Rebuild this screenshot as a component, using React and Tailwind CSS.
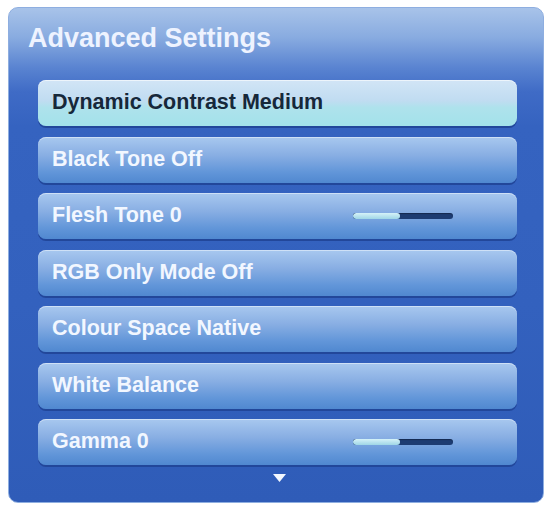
import React from "react"

const items = [
  { label: "Dynamic Contrast Medium", active: true },
  { label: "Black Tone Off" },
  { label: "Flesh Tone 0", slider: 47 },
  { label: "RGB Only Mode Off" },
  { label: "Colour Space Native" },
  { label: "White Balance" },
  { label: "Gamma 0", slider: 47 },
]

const Slider = ({ value }) => (
  <div className="w-[100px] h-[6px] rounded-full bg-[#1d3c72] overflow-hidden flex shadow-[inset_0_1px_1px_rgba(0,0,0,0.3)]">
    <div className="h-full rounded-full bg-linear-to-b from-[#d5f2f8] to-[#9fd6e6]" style={{ width: `${value}%` }} />
  </div>
)

const Row = ({ label, active, slider }) => (
  <div
    className={
      active
        ? "h-[46px] rounded-[8px] flex items-center pl-[14px] pr-[64px] bg-[linear-gradient(180deg,#d2e5f6_0%,#c0dcf1_45%,#aee2ec_60%,#a3e2ea_100%)] shadow-[0_2px_0_#22479a,inset_0_1px_0_rgba(255,255,255,0.6)] text-[#16283a]"
        : "h-[46px] rounded-[8px] flex items-center pl-[14px] pr-[64px] bg-[linear-gradient(180deg,#a8c8ef_0%,#88aee3_40%,#6296d9_76%,#5088d0_100%)] shadow-[0_2px_0_#22479a,inset_0_1px_0_rgba(255,255,255,0.45)] text-[#f2f7ff]"
    }
  >
    <span className="flex-1 text-[21.5px] font-bold leading-none">{label}</span>
    {slider !== undefined && <Slider value={slider} />}
  </div>
)

export default function App() {
  return (
    <div className="w-[548px] h-[506px] bg-white pt-[7px] pl-[8px] font-['Liberation_Sans',Arial,sans-serif]">
      <div className="w-[536px] h-[496px] rounded-[10px] border border-[#8eaee0] bg-[linear-gradient(180deg,#a8c3e9_0%,#88abe0_6%,#5a84d1_12%,#3f6bc6_17%,#3563c0_24%,#3361be_60%,#2f5cb8_100%)] flex flex-col pl-[29px] pr-[26px]">
        <h1 className="mt-[17px] -ml-[10px] text-[27px] leading-none font-bold text-[#eef3ff]">
          Advanced Settings
        </h1>
        <div className="mt-[28px] flex flex-col gap-[10.5px]">
          {items.map((it) => (
            <Row key={it.label} {...it} />
          ))}
        </div>
        <div className="mt-[9px] flex justify-center">
          <svg width="13" height="8" viewBox="0 0 13 8" className="ml-[3px]">
            <path d="M0 0 H13 L6.5 8 Z" fill="#f4f8ff" />
          </svg>
        </div>
      </div>
    </div>
  )
}
